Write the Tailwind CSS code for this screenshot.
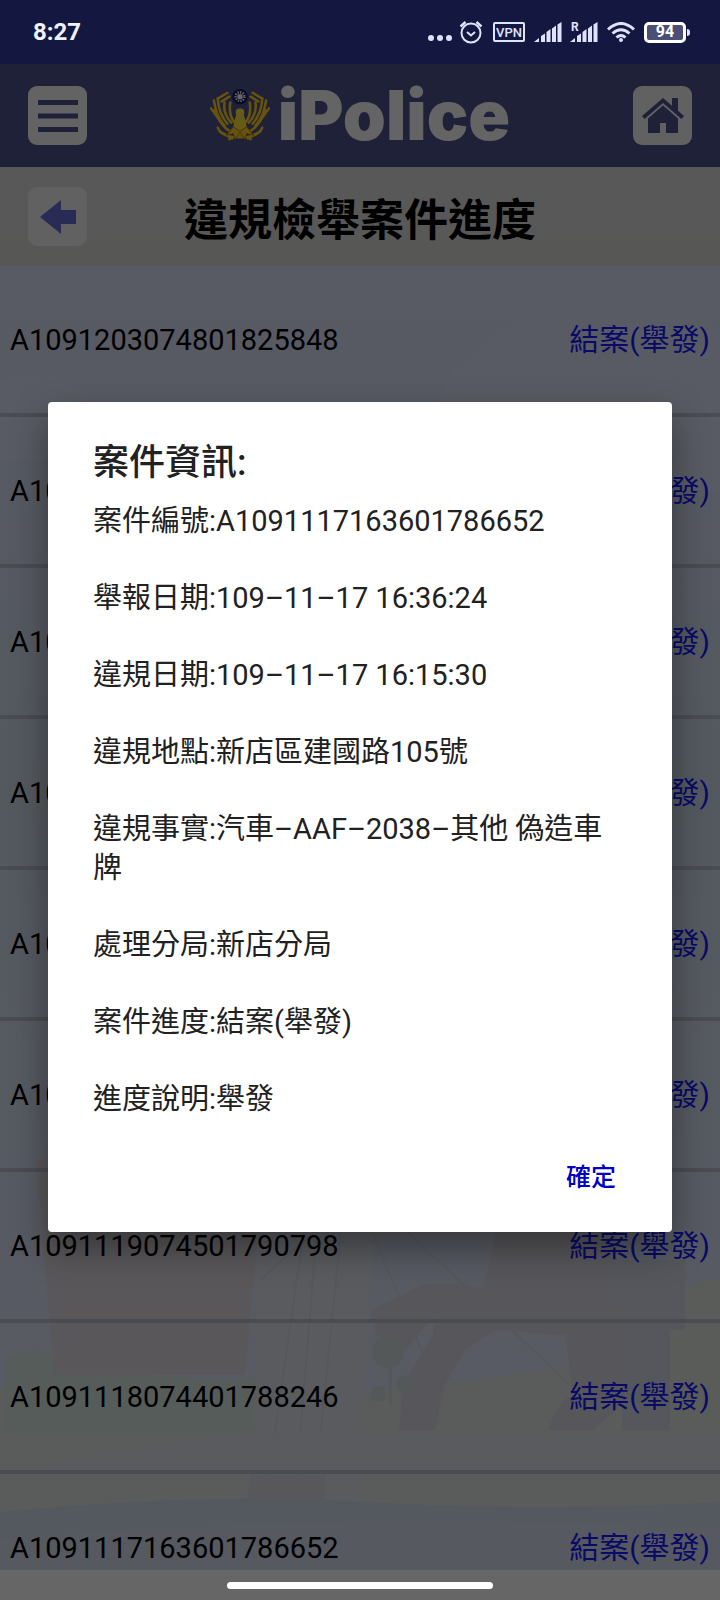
<!DOCTYPE html>
<html lang="zh-Hant">
<head>
<meta charset="utf-8">
<meta name="viewport" content="width=device-width, initial-scale=1">
<title>iPolice 違規檢舉案件進度</title>
<script src="https://cdn.jsdelivr.net/npm/@tailwindcss/browser@4"></script>
</head>
<body class="flex h-screen flex-col overflow-hidden bg-[#666666] font-['Roboto','Noto_Sans_CJK_TC',sans-serif]">

<!-- Status bar -->
<div class="flex h-16 shrink-0 items-center justify-between bg-[#141841] pr-[30px] pl-[33px] text-[#dfe2fb]">
  <span class="text-[24px] leading-[30px] font-bold text-[#f1f2ff]">8:27</span>
  <div class="flex items-center">
    <svg class="mr-[7px] h-5 w-6" viewBox="0 0 24 20" fill="currentColor"><circle cx="3" cy="16" r="3"/><circle cx="12" cy="16" r="3"/><circle cx="21" cy="16" r="3"/></svg>
    <svg class="mr-[10px] h-6 w-6" viewBox="0 0 24 24" fill="none" stroke="currentColor" stroke-width="2"><circle cx="12" cy="13" r="9.5"/><path d="M8 12l4 3.500 4-3.500" /><path d="M1.500 6.500L6.500 2M22.500 6.500L17.500 2" stroke-width="2.400"/></svg>
    <span class="mr-[9px] flex h-5 w-8 items-center justify-center rounded-[2px] border-2 border-current text-[13px] leading-none font-medium">VPN</span>
    <svg class="mr-2 h-5 w-7" viewBox="0 0 28 20" fill="currentColor"><path d="M0 20l5-4v4zM7 14l4-2.500V20H7zM12.500 10l4-3v13h-4zM18 6.500l4-3V20h-4zM23.500 2.500L27.500 0v20h-4z"/></svg>
    <svg class="mr-[9px] h-6 w-7 self-end" viewBox="0 -2 28 24" fill="currentColor"><path d="M0 20l5-4v4zM7 14l4-2.500V20H7zM12.500 10l4-3v13h-4zM18 6.500l4-3V20h-4zM23.500 2.500L27.500 0v20h-4z"/><text x="1" y="9" font-size="12" font-weight="700">R</text></svg>
    <svg class="mr-[9px] h-5 w-7" viewBox="0 0 28 20" fill="none" stroke="currentColor" stroke-width="3"><path d="M1 7.500Q14-4.500 27 7.500M5.500 11.500Q14 4 22.500 11.500M9.500 15.500Q14 11.500 18.500 15.500"/><circle cx="14" cy="18" r="2" fill="currentColor" stroke="none"/></svg>
    <span class="flex h-[21px] w-[42px] items-center justify-center rounded-[5px] border-[3px] border-current bg-[#4b4f76] text-[16px] leading-none font-bold text-white">94</span>
    <span class="ml-px h-[7px] w-[3px] rounded-r bg-current"></span>
  </div>
</div>

<div class="relative flex min-h-0 flex-1 flex-col">
  <!-- App header -->
  <header class="flex h-[103px] shrink-0 items-center justify-between bg-[#4c538c] px-7">
    <button type="button" aria-label="選單" class="flex size-[59px] items-center justify-center rounded-[9px] bg-[#f8f8f8]">
      <svg class="h-8 w-10" viewBox="0 0 40 32" fill="#4c538c"><path d="M0 0h40v5H0zM0 13.500h40v5H0zM0 27h40v5H0z"/></svg>
    </button>
    <div class="flex items-center gap-2">
      <svg class="h-[56px] w-[60px]" viewBox="0 0 62 56">
        <g fill="none" stroke="#ffcf20" stroke-width="2.600" stroke-linecap="round">
          <path d="M30 46Q14 46 5 22M30 50Q12 50 8 40M15 38Q7 30 4 12M18 36Q9 26 8 10M22 35Q13 25 15 14M25 34Q19 27 21 14M32 46Q48 46 57 22M32 50Q50 50 54 40M47 38Q55 30 58 12M44 36Q53 26 54 10M40 35Q49 25 47 14M37 34Q43 27 41 14"/>
          <path d="M8 10l10-6M12 13l8-5M54 10L44 4M50 13l-8-5M10 44l13 7M52 44l-13 7M20 52l11-5 11 5M1 20l10 14M61 20L51 34"/>
        </g>
        <path d="M31 20q6 0 4 7l3 12-7 6-7-6 3-12q-2-7 4-7z" fill="#ffe03a"/>
        <path d="M24 39l-7 9 7-2 2 6 5-7 5 7 2-6 7 2-7-9-7 5z" fill="#ffcf20" stroke="#a87c18"/>
        <circle cx="31" cy="8" r="8" fill="#17186a"/>
        <circle cx="31" cy="8" r="4.500" fill="none" stroke="#fff" stroke-width="2.500" stroke-dasharray="1.300 1.300"/><circle cx="31" cy="8" r="2.800" fill="#fff"/>
      </svg>
      <span class="font-['Inter'] text-[69px] leading-none font-black text-[#fafafa]">iPolice</span>
    </div>
    <button type="button" aria-label="首頁" class="flex size-[59px] items-center justify-center rounded-[9px] bg-[#f2f2f2]">
      <svg class="h-9 w-[42px]" viewBox="0 0 42 36" fill="#4c538c"><path d="M21 0L0 18l2.500 3L21 5l18.500 16 2.500-3-6-5.200V0h-6v7.800z"/><path d="M21 7.500L6 20.500V35h12V25h6v10h12V20.500z"/></svg>
    </button>
  </header>

  <!-- Title bar -->
  <div class="grid h-[99px] shrink-0 grid-cols-[59px_1fr_59px] items-center bg-linear-to-b from-[#dcdcdc] from-60% to-[#d8d8d3] px-7">
    <button type="button" aria-label="返回" class="flex size-[59px] items-center justify-center rounded-[9px] bg-[#f2f2f2]">
      <svg class="h-[34px] w-9" viewBox="0 0 36 34" fill="#656dd0"><path d="M0 17L21 0v10h15v14H21v10z"/></svg>
    </button>
    <h1 class="pt-2 text-center text-[44px] leading-[60px] font-bold text-black">違規檢舉案件進度</h1>
  </div>

  <!-- Case list over a pale city illustration -->
  <main class="relative min-h-0 flex-1 overflow-hidden bg-linear-to-b from-[#dce1fa] via-[#d2deee] via-40% to-[#dfe5fa]">
    <svg class="absolute inset-0 size-full" viewBox="0 266 720 1304" preserveAspectRatio="none" aria-hidden="true">
      <g fill="#e3e9fa" opacity="0.4"><path d="M430 420q20-70 90-100 90-60 200 10v160H430zM0 380q60-20 90 20v60H0z"/></g>
      <path d="M0 1390q140-30 270 10 250-20 450-60v175H0z" fill="#dee6e4"/>
      <path d="M5 1360q30-20 80 0t180 20v50H5z" fill="#d8e6e2"/>
      <path d="M640 1330q30-50 80-50v140h-80z" fill="#dee5df"/>
      <path d="M36 1160h228l-19 215H54z" fill="#dfd9e0"/>
      <path d="M260 1160h120l-30 420H250z" fill="#dee4ee"/>
      <g fill="none" stroke="#d3dae6" stroke-width="2"><path d="M260 1280l90-80M265 1500l45-310M295 1500l25-310M320 1440l25-250M365 1215l75 180M390 1215l180 170"/></g>
      <path d="M0 1475q180-45 350-43t370 6v32H0z" fill="#dfe3ec"/>
      <path d="M250 1475h75v95h-85z" fill="#dddde6"/>
      <path d="M423 1285q40-4 60 5l20-90h110l15 200-35 30h-45q10-30 25-35l-8-60-70-5-30 20-20 35-10 45h-36l4-45 30-50 3-20-18 20-12 15-30-15-6-25z" fill="#dad7e1"/>
      <path d="M600 1260h85v70h-15v100h-48v-110z" fill="#d5dae6"/>
      <g fill="#d5dddf"><path d="M389 1350h3v55h-3z"/><circle cx="388" cy="1352" r="16"/><circle cx="378" cy="1394" r="8"/><circle cx="405" cy="1384" r="9"/></g>
      <path d="M0 1512q200-20 370-10t350 0v68H0z" fill="#d3deee"/>
      <path d="M0 1540q350-30 720-10v40H0z" fill="#d8def0"/>
    </svg>
    <ul class="relative text-[29px] leading-[40px] text-black *:flex *:h-[151px] *:items-center *:justify-between *:border-b-4 *:border-[#b9bed0] *:px-[10px]">
      <li><span>A1091203074801825848</span><a href="#" class="text-[30px] text-[#1818ff]">結案(舉發)</a></li>
      <li><span>A109</span><a href="#" class="text-[30px] text-[#1818ff]">結案(舉發)</a></li>
      <li><span>A109</span><a href="#" class="text-[30px] text-[#1818ff]">結案(舉發)</a></li>
      <li><span>A109</span><a href="#" class="text-[30px] text-[#1818ff]">結案(舉發)</a></li>
      <li><span>A109</span><a href="#" class="text-[30px] text-[#1818ff]">結案(舉發)</a></li>
      <li><span>A109</span><a href="#" class="text-[30px] text-[#1818ff]">結案(舉發)</a></li>
      <li><span>A1091119074501790798</span><a href="#" class="text-[30px] text-[#1818ff]">結案(舉發)</a></li>
      <li><span>A1091118074401788246</span><a href="#" class="text-[30px] text-[#1818ff]">結案(舉發)</a></li>
      <li><span>A1091117163601786652</span><a href="#" class="text-[30px] text-[#1818ff]">結案(舉發)</a></li>
    </ul>
  </main>

  <!-- Dialog -->
  <div class="absolute inset-0 flex items-center justify-center bg-black/60 px-12">
    <section role="dialog" aria-modal="true" aria-labelledby="case-title" class="flex w-full flex-col rounded-[4px] bg-white pt-[35px] pb-[26px] shadow-[0_16px_36px_rgba(0,0,0,0.38)]">
      <h2 id="case-title" class="px-[45px] text-[36px] leading-[52px] font-medium text-[#212121]">案件資訊:</h2>
      <div class="mt-[13px] flex flex-col gap-[38px] px-[45px] text-[29px] leading-[39px] text-[#212121]">
        <p>案件編號:A1091117163601786652</p>
        <p>舉報日期:109–11–17 16:36:24</p>
        <p>違規日期:109–11–17 16:15:30</p>
        <p>違規地點:新店區建國路105號</p>
        <p>違規事實:汽車–AAF–2038–其他 偽造車牌</p>
        <p>處理分局:新店分局</p>
        <p>案件進度:結案(舉發)</p>
        <p>進度說明:舉發</p>
      </div>
      <button type="button" class="mt-[31px] mr-10 h-14 self-end px-4 text-[25px] leading-[36px] font-medium text-[#0000c8]">確定</button>
    </section>
  </div>
</div>

<!-- Gesture bar -->
<div class="flex h-[30px] shrink-0 items-center justify-center">
  <span class="h-[7px] w-[266px] rounded-full bg-white"></span>
</div>
</body>
</html>
